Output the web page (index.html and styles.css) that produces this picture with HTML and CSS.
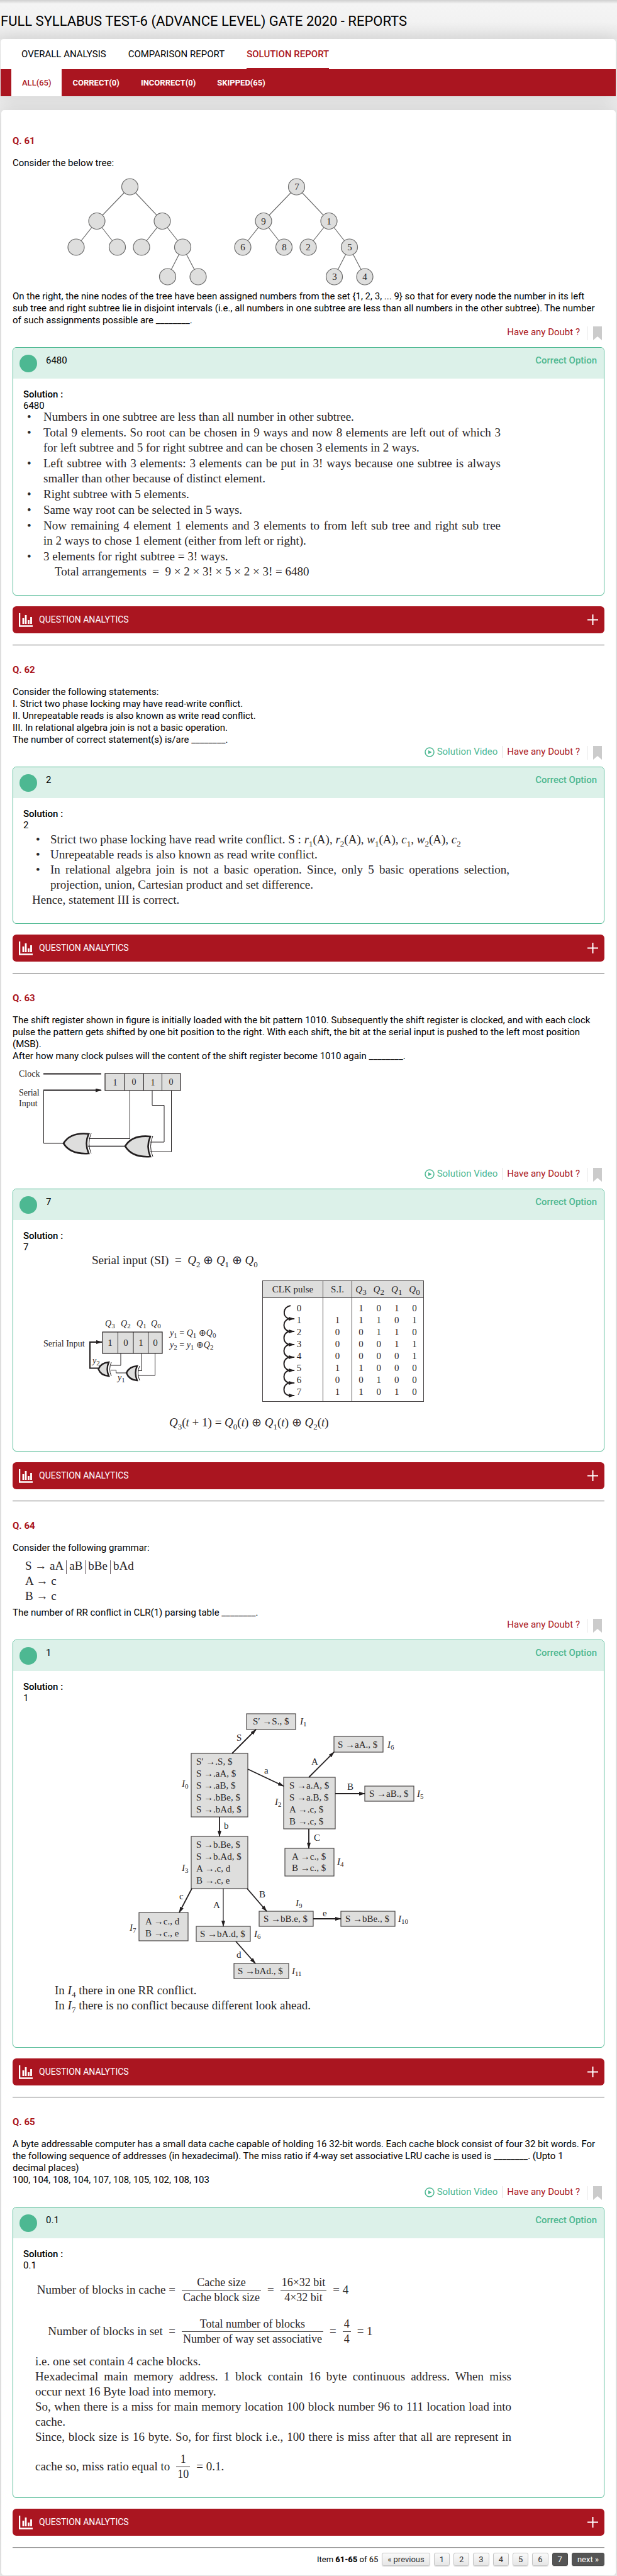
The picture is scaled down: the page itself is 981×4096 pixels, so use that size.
FILE: index.html
```html
<!DOCTYPE html>
<html lang="en">
<head>
<meta charset="utf-8">
<title>Full Syllabus Test-6 - Reports</title>
<link rel="stylesheet" href="styles.css">
</head>
<body>
<svg class="defs" width="0" height="0" aria-hidden="true">
  <defs>
    <marker id="arrow" viewBox="0 0 10 6" refX="9" refY="3" markerWidth="10" markerHeight="6" markerUnits="userSpaceOnUse" orient="auto"><path d="M0 0L10 3L0 6z" fill="#231f20"/></marker>
    <symbol id="chart" viewBox="0 0 22 22"><path d="M1 0V20.500H22" fill="none" stroke="#fff" stroke-width="2.500"/><path d="M7 8v9M11 3v14M15.500 11v6M19.500 6v11" stroke="#fff" stroke-width="2.800" fill="none"/></symbol>
    <symbol id="plus" viewBox="0 0 17 17"><path d="M0 8.500H17M8.500 0V17" stroke="#fff" stroke-width="2" fill="none"/></symbol>
    <symbol id="mark" viewBox="0 0 14 22"><path d="M0 0H14V22L7 16L0 22z" fill="#cbcbcb"/></symbol>
    <symbol id="play" viewBox="0 0 16 16"><circle cx="8" cy="8" r="7" fill="none" stroke="#4db892" stroke-width="1.500"/><path d="M6 5L11.500 8L6 11z" fill="#4db892"/></symbol>
  </defs>
</svg>

<header class="title"><h1>FULL SYLLABUS TEST-6 (ADVANCE LEVEL) GATE 2020 - REPORTS</h1></header>

<section class="tabs-card">
  <nav class="tabs">
    <a href="#overall">OVERALL ANALYSIS</a>
    <a href="#comparison">COMPARISON REPORT</a>
    <a href="#solution" class="active">SOLUTION REPORT</a>
  </nav>
  <nav class="filters">
    <a href="#all" class="active">ALL(65)</a>
    <a href="#correct">CORRECT(0)</a>
    <a href="#incorrect">INCORRECT(0)</a>
    <a href="#skipped">SKIPPED(65)</a>
  </nav>
</section>

<main class="card">

<article class="question">
  <h2>Q. 61</h2>
  <p>Consider the below tree:</p>
  <svg class="drawing" width="600" height="193" viewBox="0 0 600 193">
    <g id="tree" stroke="#6b6b6b" stroke-width="1.200">
      <path d="M186.500 28L134 82.500L101 124M134 82.500L166.500 124M186.500 28L238 82.500L205 124M238 82.500L270.500 124L246.500 171M270.500 124L295 171" fill="none"/>
      <g fill="#dededd">
        <circle cx="186.500" cy="28" r="13"/><circle cx="134" cy="82.500" r="13"/><circle cx="238" cy="82.500" r="13"/><circle cx="101" cy="124" r="13"/><circle cx="166.500" cy="124" r="13"/><circle cx="205" cy="124" r="13"/><circle cx="270.500" cy="124" r="13"/><circle cx="246.500" cy="171" r="13"/><circle cx="295" cy="171" r="13"/>
      </g>
    </g>
    <use href="#tree" x="265"/>
    <g class="t15 mid">
      <text x="452" y="33">7</text><text x="399" y="88">9</text><text x="503" y="88">1</text><text x="366" y="129">6</text><text x="432" y="129">8</text><text x="470" y="129">2</text><text x="536" y="129">5</text><text x="512" y="176">3</text><text x="560" y="176">4</text>
    </g>
  </svg>
  <p>On the right, the nine nodes of the tree have been assigned numbers from the set {1, 2, 3, ... 9} so that for every node the number in its left<br>sub tree and right subtree lie in disjoint intervals (i.e., all numbers in one subtree are less than all numbers in the other subtree). The number<br>of such assignments possible are ________.</p>
  <div class="actions"><a class="doubt" href="#doubt61">Have any Doubt ?</a><button class="bookmark" aria-label="Bookmark"><svg width="14" height="22"><use href="#mark"/></svg></button></div>
  <section class="answer">
    <div class="answer-head"><span class="dot"></span><span>6480</span><strong>Correct Option</strong></div>
    <div class="solution">
      <h3>Solution :</h3>
      <p>6480</p>
      <div class="book tight">
        <ul>
          <li>Numbers in one subtree are less than all number in other subtree.</li>
          <li><span class="full">Total 9 elements. So root can be chosen in 9 ways and now 8 elements are left out of which 3</span> for left subtree and 5 for right subtree and can be chosen 3 elements in 2 ways.</li>
          <li><span class="full">Left subtree with 3 elements: 3 elements can be put in 3! ways because one subtree is always</span> smaller than other because of distinct element.</li>
          <li>Right subtree with 5 elements.</li>
          <li>Same way root can be selected in 5 ways.</li>
          <li><span class="full">Now remaining 4 element 1 elements and 3 elements to from left sub tree and right sub tree</span> in 2 ways to chose 1 element (either from left or right).</li>
          <li>3 elements for right subtree = 3! ways.</li>
        </ul>
        <p class="total">Total arrangements &nbsp;=&nbsp; 9 × 2 × 3! × 5 × 2 × 3! = 6480</p>
      </div>
    </div>
  </section>
  <button class="analytics"><svg width="22" height="22"><use href="#chart"/></svg><span>QUESTION ANALYTICS</span><svg width="17" height="17"><use href="#plus"/></svg></button>
</article>
<hr>

<article class="question">
  <h2>Q. 62</h2>
  <p>Consider the following statements:<br>I. Strict two phase locking may have read-write conflict.<br>II. Unrepeatable reads is also known as write read conflict.<br>III. In relational algebra join is not a basic operation.<br>The number of correct statement(s) is/are ________.</p>
  <div class="actions"><a class="video" href="#video62"><svg width="16" height="16"><use href="#play"/></svg>Solution Video</a><a class="doubt" href="#doubt62">Have any Doubt ?</a><button class="bookmark" aria-label="Bookmark"><svg width="14" height="22"><use href="#mark"/></svg></button></div>
  <section class="answer">
    <div class="answer-head"><span class="dot"></span><span>2</span><strong>Correct Option</strong></div>
    <div class="solution">
      <h3>Solution :</h3>
      <p>2</p>
      <div class="book inset">
        <ul>
          <li>Strict two phase locking have read write conflict. S : <i>r</i><sub>1</sub>(A), <i>r</i><sub>2</sub>(A), <i>w</i><sub>1</sub>(A), <i>c</i><sub>1</sub>, <i>w</i><sub>2</sub>(A), <i>c</i><sub>2</sub></li>
          <li>Unrepeatable reads is also known as read write conflict.</li>
          <li><span class="full">In relational algebra join is not a basic operation. Since, only 5 basic operations selection,</span> projection, union, Cartesian product and set difference.</li>
        </ul>
        <p>Hence, statement III is correct.</p>
      </div>
    </div>
  </section>
  <button class="analytics"><svg width="22" height="22"><use href="#chart"/></svg><span>QUESTION ANALYTICS</span><svg width="17" height="17"><use href="#plus"/></svg></button>
</article>
<hr>

<article class="question">
  <h2>Q. 63</h2>
  <p>The shift register shown in figure is initially loaded with the bit pattern 1010. Subsequently the shift register is clocked, and with each clock<br>pulse the pattern gets shifted by one bit position to the right. With each shift, the bit at the serial input is pushed to the left most position<br>(MSB).<br>After how many clock pulses will the content of the shift register become 1010 again ________.</p>
  <svg class="drawing" width="280" height="168" viewBox="0 0 280 168">
    <g fill="none" stroke="#231f20" stroke-width="1">
      <rect x="147" y="18" width="120" height="27" fill="#dededd" stroke-width="1.200"/>
      <path d="M177.500 18V45M208.500 18V45M237.500 18V45"/>
      <path d="M49 18.500H141M49 44.500H141" stroke-width="2.200" marker-end="url(#arrow)"/>
      <path d="M49.500 44V129H81M186.500 45V121.500H121M222 45V68.500H241V127H219M252.500 45V142.500H219"/>
      <path d="M120 133.500H179" stroke-width="1.600"/>
      <path d="M121 114Q92 111 81 129Q92 147 121 145Q114 129 121 114z" fill="#dededd" stroke-width="2.600"/>
      <path d="M125 113Q118 129 125 145"/>
      <path d="M219 118Q190 115 179 133.500Q190 152 219 150Q212 134 219 118z" fill="#dededd" stroke-width="2.600"/>
      <path d="M223 117Q216 134 223 150"/>
    </g>
    <g class="t14"><text x="10" y="23">Clock</text><text x="10" y="53">Serial</text><text x="10" y="70">Input</text></g>
    <g class="t14 mid"><text x="163" y="37">1</text><text x="193" y="36">0</text><text x="223" y="37">1</text><text x="252" y="36">0</text></g>
  </svg>
  <div class="actions"><a class="video" href="#video63"><svg width="16" height="16"><use href="#play"/></svg>Solution Video</a><a class="doubt" href="#doubt63">Have any Doubt ?</a><button class="bookmark" aria-label="Bookmark"><svg width="14" height="22"><use href="#mark"/></svg></button></div>
  <section class="answer">
    <div class="answer-head"><span class="dot"></span><span>7</span><strong>Correct Option</strong></div>
    <div class="solution">
      <h3>Solution :</h3>
      <p>7</p>
      <div class="book register">
        <p class="serial-eq">Serial input (SI) &nbsp;=&nbsp; <i>Q</i><sub>2</sub> ⊕ <i>Q</i><sub>1</sub> ⊕ <i>Q</i><sub>0</sub></p>
        <div class="circuit">
          <svg width="380" height="192" viewBox="0 0 380 192">
            <g fill="none" stroke="#231f20" stroke-width="1">
              <rect x="126" y="82" width="95" height="34" fill="#dededd" stroke-width="1.200"/>
              <path d="M150.500 82V116M175 82V116M198.500 82V116"/>
              <path d="M119 139.500H106V98H125" stroke-width="2" marker-end="url(#arrow)"/>
              <path d="M155 116V135H139M139 142.500H147.500V147H164M188.500 116V143.500H183M209.500 116V151H183"/>
              <path d="M136 130Q123 131 119.500 141Q123 151 136 152Q131 141 136 130z" fill="#dededd" stroke-width="2.400"/><path d="M140 130Q135 141 140 152"/>
              <path d="M181 136Q168 137 164 147Q168 158 181 159Q176 147 181 136z" fill="#dededd" stroke-width="2.400"/><path d="M185 136Q180 147 185 159"/>
            </g>
            <g class="t14"><text x="32" y="105">Serial Input</text><text x="110" y="132"><tspan class="it">y</tspan><tspan class="sub" dy="3">2</tspan></text><text x="150" y="159"><tspan class="it">y</tspan><tspan class="sub" dy="3">1</tspan></text>
              <text x="130" y="73"><tspan class="it">Q</tspan><tspan class="sub" dy="3">3</tspan></text><text x="155" y="73"><tspan class="it">Q</tspan><tspan class="sub" dy="3">2</tspan></text><text x="180" y="73"><tspan class="it">Q</tspan><tspan class="sub" dy="3">1</tspan></text><text x="203" y="73"><tspan class="it">Q</tspan><tspan class="sub" dy="3">0</tspan></text>
              <text x="233" y="88"><tspan class="it">y</tspan><tspan class="sub" dy="3">1</tspan><tspan dy="-3"> = </tspan><tspan class="it">Q</tspan><tspan class="sub" dy="3">1</tspan><tspan dy="-3"> ⊕</tspan><tspan class="it">Q</tspan><tspan class="sub" dy="3">0</tspan></text>
              <text x="233" y="107"><tspan class="it">y</tspan><tspan class="sub" dy="3">2</tspan><tspan dy="-3"> = </tspan><tspan class="it">y</tspan><tspan class="sub" dy="3">1</tspan><tspan dy="-3"> ⊕</tspan><tspan class="it">Q</tspan><tspan class="sub" dy="3">2</tspan></text></g>
            <g class="t15 mid"><text x="138" y="104">1</text><text x="163" y="104">0</text><text x="187" y="104">1</text><text x="210" y="104">0</text></g>
          </svg>
          <div class="pulse">
            <table>
              <colgroup><col class="c-clk"><col class="c-si"><col class="c-q"><col class="c-q"><col class="c-q"><col class="c-q"></colgroup>
              <thead><tr><th>CLK pulse</th><th>S.I.</th><th><i>Q</i><sub>3</sub></th><th><i>Q</i><sub>2</sub></th><th><i>Q</i><sub>1</sub></th><th><i>Q</i><sub>0</sub></th></tr></thead>
              <tbody>
                <tr><td>0</td><td></td><td>1</td><td>0</td><td>1</td><td>0</td></tr>
                <tr><td>1</td><td>1</td><td>1</td><td>1</td><td>0</td><td>1</td></tr>
                <tr><td>2</td><td>0</td><td>0</td><td>1</td><td>1</td><td>0</td></tr>
                <tr><td>3</td><td>0</td><td>0</td><td>0</td><td>1</td><td>1</td></tr>
                <tr><td>4</td><td>0</td><td>0</td><td>0</td><td>0</td><td>1</td></tr>
                <tr><td>5</td><td>1</td><td>1</td><td>0</td><td>0</td><td>0</td></tr>
                <tr><td>6</td><td>0</td><td>0</td><td>1</td><td>0</td><td>0</td></tr>
                <tr><td>7</td><td>1</td><td>1</td><td>0</td><td>1</td><td>0</td></tr>
              </tbody>
            </table>
            <svg class="arcs" width="60" height="192" viewBox="0 0 60 192">
              <g fill="none" stroke="#231f20" stroke-width="2">
                <path d="M45 40C32 43 32 57 42 61H51" marker-end="url(#arrow)"/><path d="M42 61C32 65 32 77 42 81H51" marker-end="url(#arrow)"/><path d="M42 81C32 85 32 98 42 102H51" marker-end="url(#arrow)"/><path d="M42 102C32 106 32 118 42 122H51" marker-end="url(#arrow)"/><path d="M42 122C32 126 32 139 42 143H51" marker-end="url(#arrow)"/><path d="M42 143C32 147 32 159 42 163H51" marker-end="url(#arrow)"/><path d="M42 163C32 167 32 180 42 183H51" marker-end="url(#arrow)"/>
              </g>
            </svg>
          </div>
        </div>
        <p class="next-eq"><i>Q</i><sub>3</sub>(<i>t</i> + 1) = <i>Q</i><sub>0</sub>(<i>t</i>) ⊕ <i>Q</i><sub>1</sub>(<i>t</i>) ⊕ <i>Q</i><sub>2</sub>(<i>t</i>)</p>
      </div>
    </div>
  </section>
  <button class="analytics"><svg width="22" height="22"><use href="#chart"/></svg><span>QUESTION ANALYTICS</span><svg width="17" height="17"><use href="#plus"/></svg></button>
</article>
<hr>

<article class="question">
  <h2>Q. 64</h2>
  <p>Consider the following grammar:</p>
  <div class="book grammar">
    <p>S → aA<span class="bar"></span>aB<span class="bar"></span>bBe<span class="bar"></span>bAd</p>
    <p>A → c</p>
    <p>B → c</p>
  </div>
  <p>The number of RR conflict in CLR(1) parsing table ________.</p>
  <div class="actions"><a class="doubt" href="#doubt64">Have any Doubt ?</a><button class="bookmark" aria-label="Bookmark"><svg width="14" height="22"><use href="#mark"/></svg></button></div>
  <section class="answer">
    <div class="answer-head"><span class="dot"></span><span>1</span><strong>Correct Option</strong></div>
    <div class="solution">
      <h3>Solution :</h3>
      <p>1</p>
      <div class="book automaton">
        <svg class="drawing" width="523" height="444" viewBox="0 4 523 444">
          <g fill="#dededd" stroke="#4a4647" stroke-width="1.200">
            <rect x="218" y="20" width="78" height="25"/><rect x="130" y="83" width="90" height="101"/><rect x="277" y="121" width="82" height="82"/><rect x="357" y="56" width="78" height="25"/><rect x="406" y="135" width="78" height="24"/><rect x="130" y="215" width="90" height="83"/><rect x="279" y="234" width="78" height="44"/><rect x="47" y="336" width="78" height="45"/><rect x="138" y="358" width="86" height="24"/><rect x="238" y="334" width="86" height="24"/><rect x="368" y="334" width="86" height="24"/><rect x="198" y="417" width="87" height="24"/>
          </g>
          <g fill="none" stroke="#231f20" stroke-width="1.800">
            <path d="M195 83L233 45" marker-end="url(#arrow)"/><path d="M220 108L277 135" marker-end="url(#arrow)"/><path d="M317 121L357 81" marker-end="url(#arrow)"/><path d="M359 147H406" marker-end="url(#arrow)"/><path d="M317 203V234" marker-end="url(#arrow)"/><path d="M175 184V215" marker-end="url(#arrow)"/><path d="M131 298L111 336" marker-end="url(#arrow)"/><path d="M181 298V358" stroke-width="1.200" marker-end="url(#arrow)"/><path d="M219 298L250 334" marker-end="url(#arrow)"/><path d="M324 346H368" marker-end="url(#arrow)"/><path d="M201 382L232 417" marker-end="url(#arrow)"/>
          </g>
          <g class="t15">
            <text x="228" y="37">S′ →S., $</text>
            <text x="138" y="101">S′ →.S, $</text><text x="138" y="120">S →.aA, $</text><text x="138" y="139">S →.aB, $</text><text x="138" y="158">S →.bBe, $</text><text x="138" y="177">S →.bAd, $</text>
            <text x="286" y="139">S →a.A, $</text><text x="286" y="158">S →a.B, $</text><text x="286" y="177">A →.c, $</text><text x="286" y="196">B →.c, $</text>
            <text x="363" y="74">S →aA., $</text><text x="413" y="152">S →aB., $</text>
            <text x="138" y="233">S →b.Be, $</text><text x="138" y="252">S →b.Ad, $</text><text x="138" y="271">A →.c, d</text><text x="138" y="290">B →.c, e</text>
            <text x="290" y="252">A →c., $</text><text x="290" y="270">B →c., $</text>
            <text x="57" y="355">A →c., d</text><text x="57" y="374">B →c., e</text>
            <text x="144" y="375">S →bA.d, $</text><text x="245" y="351">S →bB.e, $</text><text x="375" y="351">S →bBe., $</text><text x="204" y="434">S →bAd., $</text>
            <text x="202" y="63">S</text><text x="246" y="115">a</text><text x="321" y="101">A</text><text x="378" y="141">B</text><text x="182" y="203">b</text><text x="325" y="222">C</text><text x="111" y="315">c</text><text x="165" y="329">A</text><text x="238" y="312">B</text><text x="339" y="342">e</text><text x="202" y="408">d</text>
            <text x="303" y="37"><tspan class="it">I</tspan><tspan class="sub" dy="3">1</tspan></text><text x="442" y="74"><tspan class="it">I</tspan><tspan class="sub" dy="3">6</tspan></text><text x="489" y="152"><tspan class="it">I</tspan><tspan class="sub" dy="3">5</tspan></text><text x="115" y="136"><tspan class="it">I</tspan><tspan class="sub" dy="3">0</tspan></text><text x="263" y="165"><tspan class="it">I</tspan><tspan class="sub" dy="3">2</tspan></text><text x="115" y="270"><tspan class="it">I</tspan><tspan class="sub" dy="3">3</tspan></text><text x="362" y="260"><tspan class="it">I</tspan><tspan class="sub" dy="3">4</tspan></text><text x="32" y="365"><tspan class="it">I</tspan><tspan class="sub" dy="3">7</tspan></text><text x="230" y="375"><tspan class="it">I</tspan><tspan class="sub" dy="3">6</tspan></text><text x="296" y="326"><tspan class="it">I</tspan><tspan class="sub" dy="3">9</tspan></text><text x="459" y="351"><tspan class="it">I</tspan><tspan class="sub" dy="3">10</tspan></text><text x="290" y="434"><tspan class="it">I</tspan><tspan class="sub" dy="3">11</tspan></text>
          </g>
        </svg>
        <p>In <i>I</i><sub>4</sub> there in one RR conflict.</p>
        <p>In <i>I</i><sub>7</sub> there is no conflict because different look ahead.</p>
      </div>
    </div>
  </section>
  <button class="analytics"><svg width="22" height="22"><use href="#chart"/></svg><span>QUESTION ANALYTICS</span><svg width="17" height="17"><use href="#plus"/></svg></button>
</article>
<hr>

<article class="question">
  <h2>Q. 65</h2>
  <p>A byte addressable computer has a small data cache capable of holding 16 32-bit words. Each cache block consist of four 32 bit words. For<br>the following sequence of addresses (in hexadecimal). The miss ratio if 4-way set associative LRU cache is used is ________. (Upto 1<br>decimal places)<br>100, 104, 108, 104, 107, 108, 105, 102, 108, 103</p>
  <div class="actions"><a class="video" href="#video65"><svg width="16" height="16"><use href="#play"/></svg>Solution Video</a><a class="doubt" href="#doubt65">Have any Doubt ?</a><button class="bookmark" aria-label="Bookmark"><svg width="14" height="22"><use href="#mark"/></svg></button></div>
  <section class="answer">
    <div class="answer-head"><span class="dot"></span><span>0.1</span><strong>Correct Option</strong></div>
    <div class="solution">
      <h3>Solution :</h3>
      <p>0.1</p>
      <div class="book cache">
        <div class="eq"><span class="lhs">Number of blocks in cache =</span><span class="frac"><span>Cache size</span><span>Cache block size</span></span>=<span class="frac"><span>16×32 bit</span><span>4×32 bit</span></span>= 4</div>
        <div class="eq second"><span class="lhs">Number of blocks in set &nbsp;=</span><span class="frac"><span>Total number of blocks</span><span>Number of way set associative</span></span>=<span class="frac"><span>4</span><span>4</span></span>= 1</div>
        <p>i.e. one set contain 4 cache blocks.</p>
        <p><span class="full">Hexadecimal main memory address. 1 block contain 16 byte continuous address. When miss</span> occur next 16 Byte load into memory.</p>
        <p><span class="full">So, when there is a miss for main memory location 100 block number 96 to 111 location load into</span> cache.</p>
        <p><span class="full">Since, block size is 16 byte. So, for first block i.e., 100 there is miss after that all are represent in</span></p>
        <div class="eq last">cache so, miss ratio equal to<span class="frac"><span>1</span><span>10</span></span>= 0.1.</div>
      </div>
    </div>
  </section>
  <button class="analytics"><svg width="22" height="22"><use href="#chart"/></svg><span>QUESTION ANALYTICS</span><svg width="17" height="17"><use href="#plus"/></svg></button>
</article>
<hr>

<nav class="pager">
  <span>Item <b>61-65</b> of 65</span>
  <a href="#prev">« previous</a><a href="#p1">1</a><a href="#p2">2</a><a href="#p3">3</a><a href="#p4">4</a><a href="#p5">5</a><a href="#p6">6</a><a href="#p7" class="dark">7</a><a href="#next" class="dark">next »</a>
</nav>
</main>
</body>
</html>
```
FILE: styles.css
```css
* { box-sizing: border-box; }
body {
  margin: 0;
  padding: 0 2px 2px 1px;
  background: #ececec;
  color: #000;
  font-family: Roboto, "Liberation Sans", sans-serif;
  font-size: 15px;
  line-height: 19px;
}
h1, h2, h3, p, ul { margin: 0; padding: 0; }
a { color: inherit; text-decoration: none; }
button { font: inherit; border: 0; padding: 0; background: none; cursor: pointer; }
svg { display: block; }
.defs { position: absolute; }

.title {
  margin: 0 -2px 0 -1px;
  padding: 20px 1px 14px;
  background: linear-gradient(#cfcfcf, #f4f4f4 6px, #f2f2f2 36px, #e6e6e6);
}
h1 { font-size: 22px; line-height: 28px; font-weight: 400; }

.tabs-card { border-radius: 5px 5px 0 0; background: #fff; box-shadow: 0 0 30px rgba(0, 0, 0, .1); overflow: hidden; }
.tabs { display: flex; gap: 35px; height: 48px; padding: 0 33px; font-size: 15px; }
.tabs a { display: flex; align-items: center; padding-top: 3px; border-bottom: 2px solid transparent; }
.tabs .active { color: #aa1520; border-color: #aa1520; font-weight: 500; }
.filters { display: flex; height: 43px; padding: 0 17px; background: #aa1520; color: #fff; font-size: 13px; font-weight: 700; }
.filters a { display: flex; align-items: center; padding: 0 17px; }
.filters .active { background: #fff; color: #aa1520; font-weight: 500; }

.card { margin: 22px 0 0 1px; padding: 39px 18px 15px; border-radius: 5px; background: #fff; box-shadow: 0 0 30px rgba(0, 0, 0, .13); }
h2 { margin-bottom: 16px; color: #aa1520; font-size: 15px; line-height: 20px; font-weight: 700; }
hr { height: 2px; margin: 18px 0 28px; border: 0; border-top: 1px solid #909090; background: #e8e8e8; }

.actions { display: flex; justify-content: flex-end; height: 19px; margin-bottom: 14px; }
.video { display: flex; align-items: center; gap: 4px; padding-right: 7px; margin-right: 7px; border-right: 1px solid #e2e2e2; color: #4db892; }
.doubt { color: #aa1520; }
.bookmark { height: 22px; margin-left: 11px; padding: 0 4px 0 9px; border-left: 1px solid #e2e2e2; }

.answer { border: 1px solid #4db892; border-radius: 6px; overflow: hidden; }
.answer-head { display: flex; align-items: flex-start; height: 49px; padding: 11px 11px 0 10px; background: #dcf1e9; }
.dot { width: 28px; height: 28px; margin-right: 14px; border-radius: 50%; background: #4db892; }
.answer-head strong { margin-left: auto; color: #4db892; font-weight: 500; }
.solution { padding: 16px 16px 25px; line-height: 18px; }
h3 { font-size: 15px; line-height: 18px; font-weight: 500; }

.analytics { display: flex; align-items: center; width: 100%; height: 43px; margin-top: 17px; padding: 0 10px; border-radius: 6px; background: #aa1520; color: #fff; font-size: 14px; }
.analytics span { margin: 0 auto 0 10px; }

.book { color: #2b2728; font-family: "Liberation Serif", serif; font-size: 19px; line-height: 24px; }
.book ul { list-style: none; }
.book li { position: relative; padding-left: 32px; width: 759px; }
.book li::before { content: "•"; position: absolute; left: 6px; }
.book .full { display: block; text-align: justify; text-align-last: justify; white-space: nowrap; }
.book sub { font-size: 13px; line-height: 0; }
.tight { margin-top: -3px; }
.tight li + li { margin-top: 1px; }
.total { padding-left: 50px; }
.inset { padding: 2px 0 0 14px; }
.inset li { padding-left: 29px; }

svg text { fill: #2b2728; font-family: "Liberation Serif", serif; }
.t14 text { font-size: 14px; }
.t15 text { font-size: 15px; }
.mid text { text-anchor: middle; }
.it { font-style: italic; }
.sub { font-size: 11px; }

.serial-eq, .next-eq { height: 24px; }
.serial-eq { margin-left: 109px; }
.circuit { display: flex; margin: 20px 0 21px; }
.pulse { position: relative; }
.arcs { position: absolute; left: 0; top: 0; }
.next-eq { margin: 0 0 8px 232px; }
.pulse table { border-collapse: collapse; border: 1px solid #4a4647; font-size: 15px; line-height: 19px; table-layout: fixed; width: 257px; }
.c-clk { width: 96px; }
.c-si { width: 46px; }
.pulse th { height: 27px; padding: 0; background: #dededd; border-bottom: 1px solid #4a4647; font-weight: 400; }
.pulse td { padding: 0; height: 19px; text-align: center; }
.pulse td:first-child { padding-left: 20px; }
.pulse tr > :nth-child(-n+2) { border-right: 1px solid #4a4647; }
.pulse tbody tr:first-child td { padding-top: 7px; height: 26px; }
.pulse tbody tr:last-child td { padding-bottom: 5px; height: 24px; }

.grammar { padding: 7px 0 5px 20px; }
.grammar p { height: 24px; }
.bar { display: inline-block; width: 1px; height: 22px; margin: 0 4px; background: #6b5f66; vertical-align: middle; }

.automaton { padding: 0 0 29px 50px; }
.automaton .drawing { margin-left: 87px; }

.cache { padding: 6px 0 0 19px; }
.cache p { width: 757px; }
.eq { display: flex; align-items: center; gap: 10px; height: 48px; }
.lhs { width: 223px; text-align: right; white-space: nowrap; }
.frac { display: inline-flex; flex-direction: column; text-align: center; font-size: 18px; line-height: 23px; }
.frac span:first-child { border-bottom: 1px solid #2b2728; }
.frac span { padding: 0 2px; }
.second { margin: 18px 0 12px; }
.last { margin-top: 11px; }

.pager { display: flex; align-items: center; justify-content: flex-end; gap: 6px; margin-top: -21px; font-size: 13px; }
.pager a { padding: 0 8px; border: 1px solid #c4c4c4; border-radius: 3px; background: linear-gradient(#fafafa, #e6e6e6); color: #333; box-shadow: 0 1px 1px rgba(0, 0, 0, .15); }
.pager .dark { border-color: #4a4a4a; background: #555; color: #fff; }
```
